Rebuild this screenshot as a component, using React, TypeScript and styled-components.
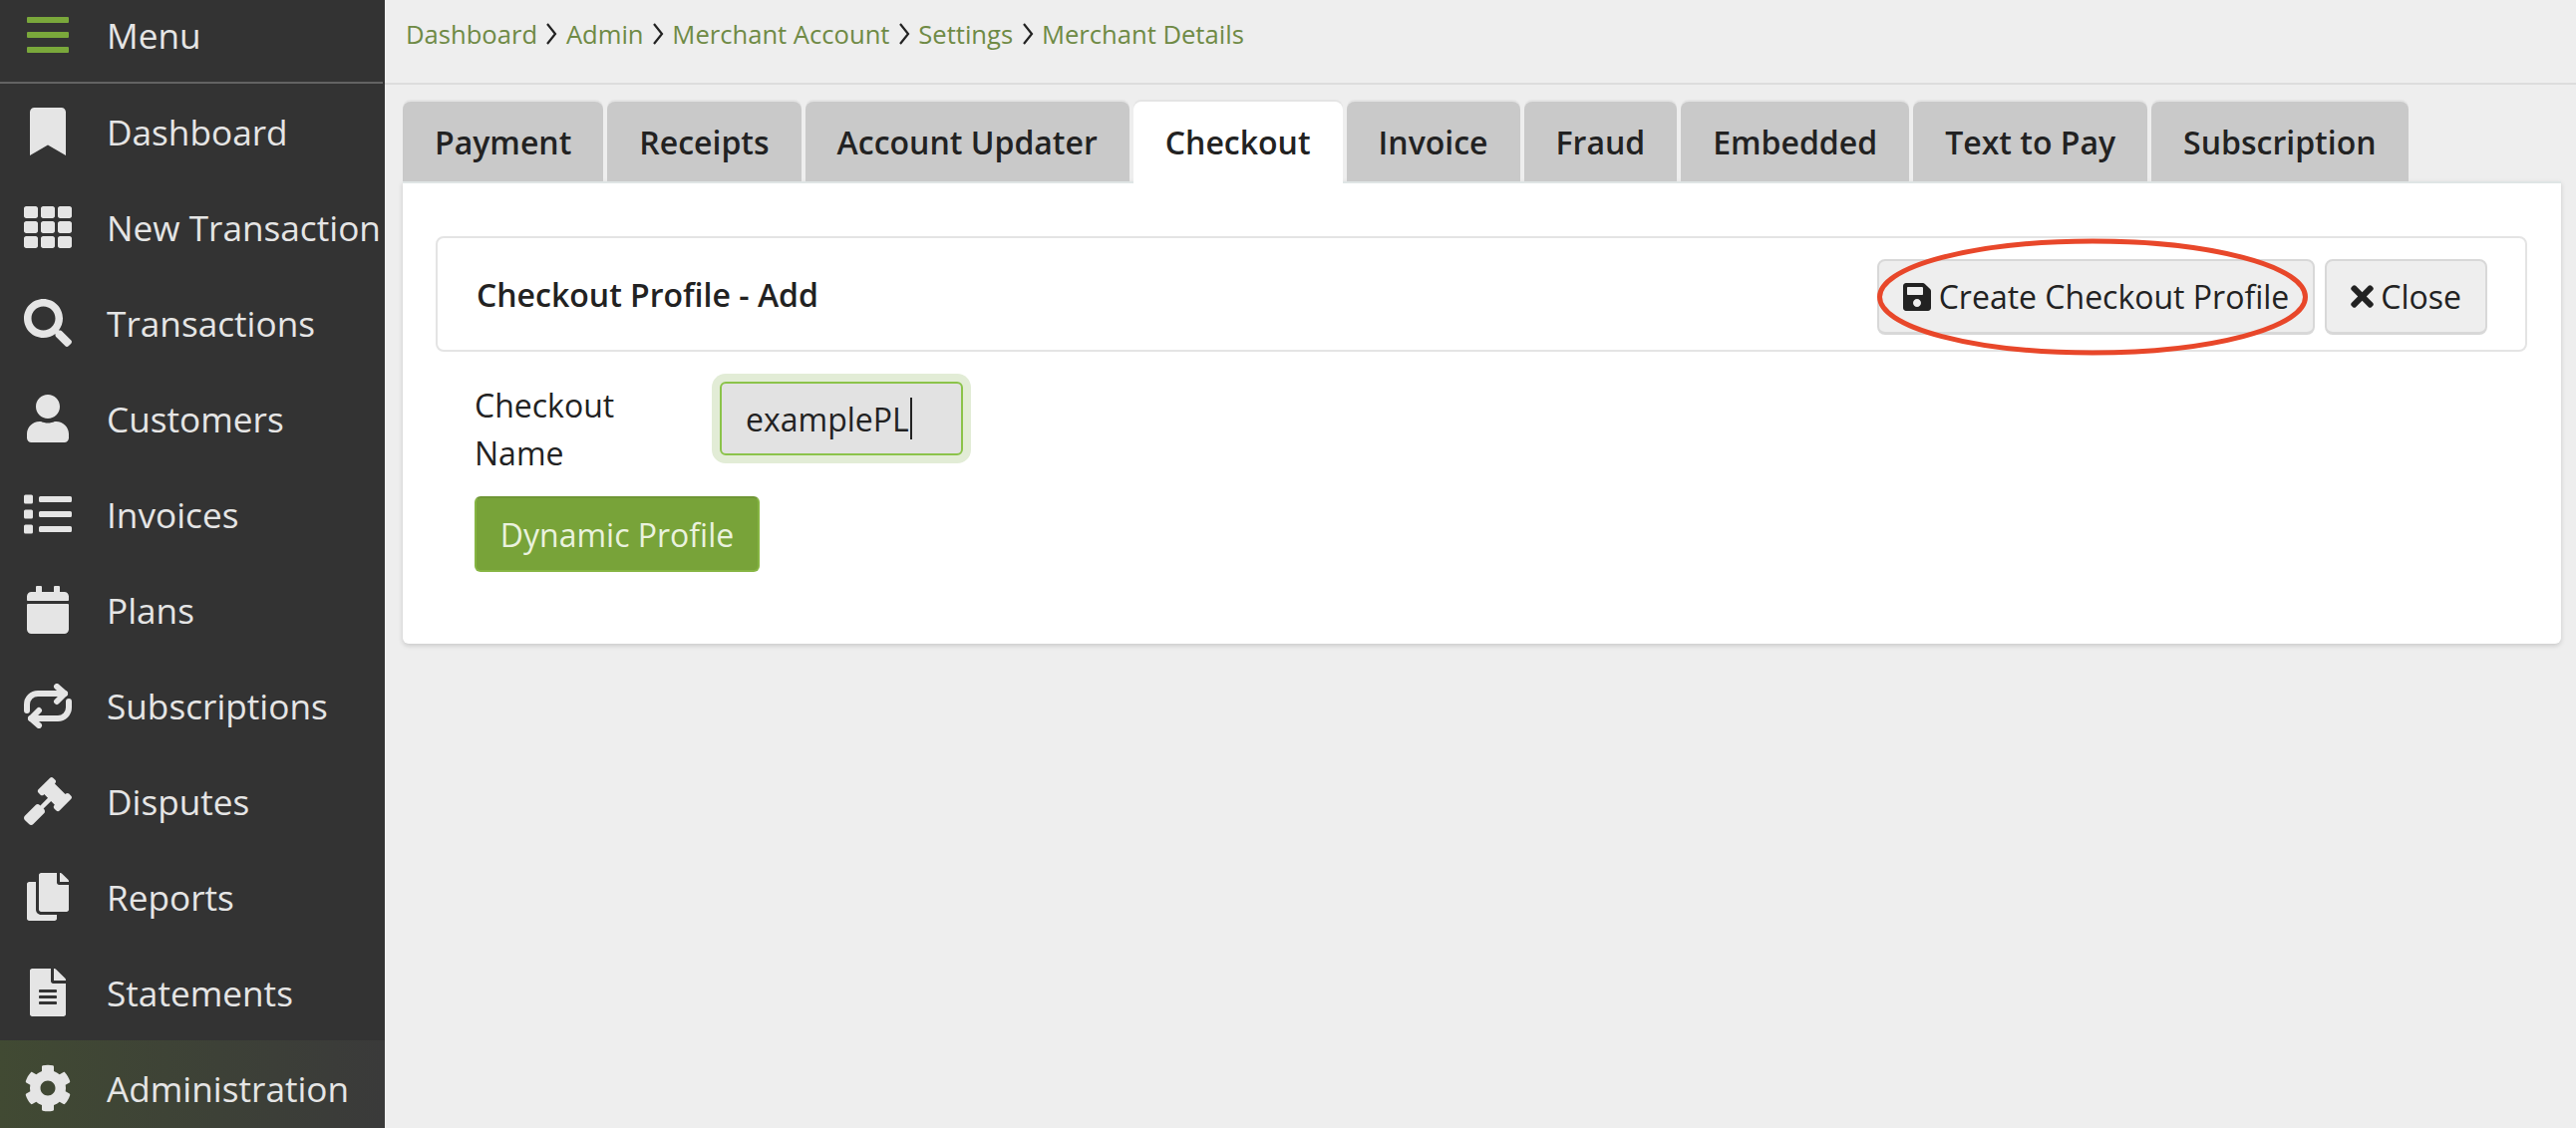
import React from 'react';
import styled, { createGlobalStyle } from 'styled-components';
import {
  FaBookmark,
  FaTh,
  FaSearch,
  FaUser,
  FaList,
  FaCalendar,
  FaGavel,
  FaCopy,
  FaFileAlt,
  FaCog,
  FaSave,
  FaTimes,
} from 'react-icons/fa';

const GlobalStyle = createGlobalStyle`
  html, body {
    margin: 0;
    padding: 0;
    background: #eeeeee;
    font-family: 'Open Sans', 'Noto Sans', sans-serif;
    color: #222222;
  }
`;

const Page = styled.div`
  display: flex;
  height: 1132px;
  overflow: hidden;
`;

const Sidebar = styled.nav`
  width: 386px;
  flex-shrink: 0;
  background: #333333;
  color: #e5e5e5;
  overflow: hidden;
`;

const MenuHeader = styled.div`
  display: flex;
  align-items: center;
  height: 70px;
  padding-bottom: 12px;
  margin-right: 2px;
  border-bottom: 2px solid #636363;
  font-size: 35.2px;
`;

const NavRow = styled.div<{ $active?: boolean }>`
  display: flex;
  align-items: center;
  height: 96px;
  font-size: 35.2px;
  white-space: nowrap;
  background: ${props => (props.$active ? 'linear-gradient(90deg, #414a33 0%, #3a3a3a 100%)' : 'transparent')};
`;

const NavIcon = styled.span`
  width: 96px;
  margin-right: 11px;
  flex-shrink: 0;
  display: flex;
  justify-content: center;
  align-items: center;
  font-size: 48px;
  color: #e5e5e5;
`;

const Main = styled.main`
  flex: 1;
  min-width: 0;
`;

const Breadcrumbs = styled.div`
  display: flex;
  align-items: center;
  gap: 7.4px;
  height: 68px;
  padding: 0 0 15px 21px;
  border-bottom: 2px solid #dddddd;
  font-size: 25.6px;
  color: #6f8a45;
`;

const Chevron = styled.svg`
  width: 14px;
  height: 22px;
  fill: none;
  stroke: #222222;
  stroke-width: 2.2;
`;

const TabBar = styled.div`
  display: flex;
  gap: 4px;
  margin: 17px 15px 0 18px;
`;

const Tab = styled.div<{ $active?: boolean }>`
  display: flex;
  align-items: center;
  height: 80px;
  padding: 0 32px;
  border-radius: 8px 8px 0 0;
  font-size: 32px;
  font-weight: 600;
  color: #222222;
  background: ${props => (props.$active ? '#ffffff' : '#c9c9c9')};
  box-shadow: 0 -2px 0 #e4e4e4;
  position: relative;
  z-index: ${props => (props.$active ? 1 : 0)};
  margin-bottom: ${props => (props.$active ? '-2px' : '0')};
  padding-bottom: ${props => (props.$active ? '2px' : '0')};
`;

const Panel = styled.section`
  margin: 0 15px 0 18px;
  height: 464px;
  padding: 53px 34px 0 33px;
  box-sizing: border-box;
  background: #ffffff;
  border-top: 2px solid #dfe5e5;
  border-radius: 0 0 6px 6px;
  box-shadow: 0 2px 5px rgba(0, 0, 0, 0.16);
`;

const ProfileHeader = styled.div`
  display: flex;
  align-items: center;
  justify-content: space-between;
  box-sizing: border-box;
  height: 116px;
  padding: 0 38.5px 0 39px;
  border: 2px solid #e4e4e4;
  border-radius: 8px;
`;

const ProfileTitle = styled.div`
  font-size: 32px;
  font-weight: 600;
  color: #222222;
`;

const Actions = styled.div`
  display: flex;
  gap: 10px;
  margin-top: 6px;
`;

const ActionButton = styled.div`
  position: relative;
  display: flex;
  align-items: center;
  gap: 7.5px;
  box-sizing: border-box;
  height: 76px;
  padding: 0 23.5px 0 24px;
  font-size: 32px;
  color: #222222;
  background: #eeeeee;
  border: 2px solid #d8d8d8;
  border-bottom-width: 3px;
  border-radius: 8px;
  white-space: nowrap;
`;

const SaveGlyph = styled(FaSave)`
  width: 28px;
  height: 32px;
`;

const CloseGlyph = styled(FaTimes)`
  width: 23px;
  height: 33px;
`;

const Annotation = styled.svg`
  position: absolute;
  left: -5px;
  top: -25px;
  width: 438px;
  height: 122px;
  overflow: visible;
  fill: none;
  stroke: #e8472a;
  stroke-width: 5;
`;

const FormRow = styled.div`
  display: flex;
  margin-top: 21px;
  padding-left: 39px;
`;

const FieldLabel = styled.div`
  width: 246px;
  font-size: 32px;
  line-height: 48px;
  padding-top: 9px;
  color: #222222;
`;

const NameField = styled.div`
  display: flex;
  align-items: center;
  box-sizing: border-box;
  width: 244px;
  height: 74px;
  margin-top: 9px;
  padding: 0 24px;
  font-size: 32px;
  color: #222222;
  background: #e2e2e2;
  border: 2px solid #8bc34a;
  border-radius: 6px;
  box-shadow: 0 0 0 8px #e2ecd6;
`;

const Caret = styled.span`
  display: inline-block;
  width: 2px;
  height: 42px;
  margin-left: 1px;
  background: #222222;
`;

const ProfileButton = styled.div`
  display: flex;
  align-items: center;
  justify-content: center;
  box-sizing: border-box;
  width: 286px;
  height: 76px;
  margin: 19px 0 0 39px;
  font-size: 32px;
  color: #eaf2de;
  background: #78a339;
  border: 2px solid #86b543;
  border-top-color: #6f9635;
  border-radius: 6px;
`;

const BarsIcon = () => (
  <svg width="42" height="36" viewBox="0 0 42 36" fill="#7aa83b">
    <rect x="0" y="0" width="42" height="6" rx="1" />
    <rect x="0" y="15" width="42" height="6" rx="1" />
    <rect x="0" y="30" width="42" height="6" rx="1" />
  </svg>
);

const RepeatIcon = () => (
  <svg width="48" height="45" viewBox="0 0 48 45" fill="none" stroke="#e5e5e5" strokeWidth="6" strokeLinecap="round" strokeLinejoin="round">
    <path d="M3 27 V21 A11 11 0 0 1 14 10 H41" />
    <polyline points="33,3 41,10 33,18" />
    <path d="M45 18 V24 A11 11 0 0 1 34 35 H7" />
    <polyline points="15,27 7,35 15,42" />
  </svg>
);

const navItems = [
  { label: 'Dashboard', icon: <FaBookmark /> },
  { label: 'New Transaction', icon: <FaTh /> },
  { label: 'Transactions', icon: <FaSearch /> },
  { label: 'Customers', icon: <FaUser /> },
  { label: 'Invoices', icon: <FaList /> },
  { label: 'Plans', icon: <FaCalendar /> },
  { label: 'Subscriptions', icon: <RepeatIcon /> },
  { label: 'Disputes', icon: <FaGavel /> },
  { label: 'Reports', icon: <FaCopy /> },
  { label: 'Statements', icon: <FaFileAlt /> },
  { label: 'Administration', icon: <FaCog />, active: true },
];

const crumbs = ['Dashboard', 'Admin', 'Merchant Account', 'Settings', 'Merchant Details'];

const tabs = ['Payment', 'Receipts', 'Account Updater', 'Checkout', 'Invoice', 'Fraud', 'Embedded', 'Text to Pay', 'Subscription'];

const App: React.FC = () => (
  <Page>
    <GlobalStyle />
    <Sidebar>
      <MenuHeader>
        <NavIcon>
          <BarsIcon />
        </NavIcon>
        Menu
      </MenuHeader>
      {navItems.map(item => (
        <NavRow key={item.label} $active={item.active}>
          <NavIcon>{item.icon}</NavIcon>
          {item.label}
        </NavRow>
      ))}
    </Sidebar>
    <Main>
      <Breadcrumbs>
        {crumbs.map((crumb, i) => (
          <React.Fragment key={crumb}>
            {i > 0 && (
              <Chevron viewBox="0 0 14 22">
                <polyline points="3,1 11,11 3,21" />
              </Chevron>
            )}
            <span>{crumb}</span>
          </React.Fragment>
        ))}
      </Breadcrumbs>
      <TabBar>
        {tabs.map(tab => (
          <Tab key={tab} $active={tab === 'Checkout'}>
            {tab}
          </Tab>
        ))}
      </TabBar>
      <Panel>
        <ProfileHeader>
          <ProfileTitle>Checkout Profile - Add</ProfileTitle>
          <Actions>
            <ActionButton>
              <SaveGlyph />
              Create Checkout Profile
              <Annotation viewBox="0 0 438 122">
                <ellipse cx="219" cy="61" rx="213.5" ry="56" />
              </Annotation>
            </ActionButton>
            <ActionButton>
              <CloseGlyph />
              Close
            </ActionButton>
          </Actions>
        </ProfileHeader>
        <FormRow>
          <FieldLabel>
            Checkout
            <br />
            Name
          </FieldLabel>
          <NameField>
            examplePL
            <Caret />
          </NameField>
        </FormRow>
        <ProfileButton>Dynamic Profile</ProfileButton>
      </Panel>
    </Main>
  </Page>
);

export default App;
